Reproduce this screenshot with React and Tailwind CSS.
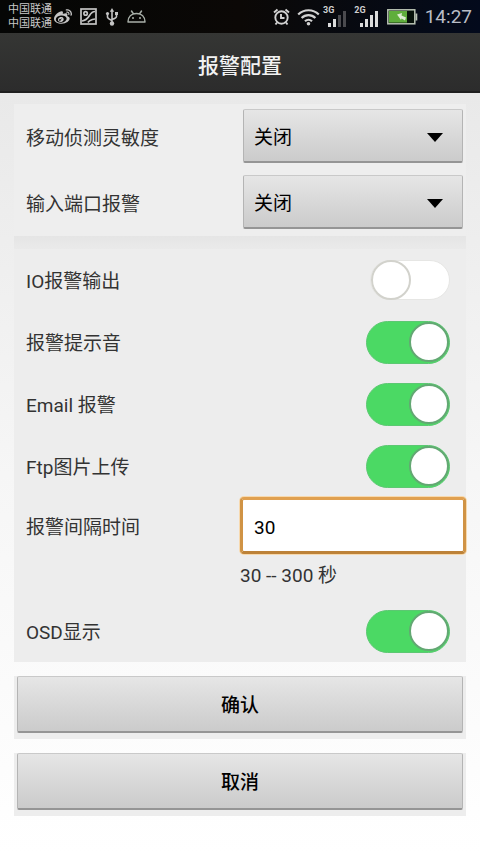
import { useState } from 'react';
import { FaWeibo } from 'react-icons/fa';

const RAISED = 'bg-linear-to-b from-[#e6e6e6] to-[#cbcbcb] border border-t-[#c9c9c9] border-x-[#b4b4b4] border-b-2 border-b-[#959595] rounded-xs';

const SWITCHES = [
  { id: 'io', label: 'IO报警输出' },
  { id: 'sound', label: '报警提示音' },
  { id: 'email', label: 'Email 报警' },
  { id: 'ftp', label: 'Ftp图片上传' },
];

function PictureIcon() {
  return (
    <svg width="17" height="17" viewBox="0 0 17 17" fill="none" stroke="#c4c4c4" strokeWidth="1.7">
      <rect x="1" y="1" width="15" height="15" />
      <circle cx="5.6" cy="5.4" r="1.7" />
      <path d="M2 13C6.500 12.500 8 10 9.500 7.500S12.500 3.500 15 3.500M8 14.500c1-2 3.500-3 7-3.500" />
    </svg>
  );
}

function UsbIcon() {
  return (
    <svg width="14" height="18" viewBox="0 0 14 18" fill="none" stroke="#c4c4c4" strokeWidth="1.6">
      <path d="M7 3v12M2.500 6v3c0 1.500 1.500 2 4.500 3.500M11.500 6v2.500c0 1.500-1.500 2-4.500 3" />
      <path d="M7 0 9.200 3.800H4.800Z" fill="#c4c4c4" stroke="none" />
      <circle cx="2.500" cy="5.500" r="1.600" fill="#c4c4c4" stroke="none" />
      <rect x="10" y="4" width="3" height="3" fill="#c4c4c4" stroke="none" />
      <circle cx="7" cy="15.500" r="2.200" fill="#c4c4c4" stroke="none" />
    </svg>
  );
}

function AndroidIcon() {
  return (
    <svg width="19" height="15" viewBox="0 0 19 15" fill="none" stroke="#a9b0a9" strokeWidth="1.500">
      <path d="M1 13C1 7.500 4.500 4.500 9.500 4.500S18 7.500 18 13ZM4.500 2l2 3M14.500 2l-2 3" strokeLinejoin="round" strokeLinecap="round" />
      <circle cx="6" cy="9" r="1" fill="#a9b0a9" stroke="none" />
      <circle cx="13" cy="9" r="1" fill="#a9b0a9" stroke="none" />
    </svg>
  );
}

function AlarmIcon() {
  return (
    <svg width="17" height="18" viewBox="0 0 17 18" fill="none" stroke="#d2d2d2" strokeWidth="1.900">
      <circle cx="8.500" cy="9.500" r="6.200" />
      <path d="M8 6v4h3.500M1 4.500 4.500 1.500M16 4.500 12.500 1.500M4 14.500l-1.500 2M13 14.500l1.500 2" />
    </svg>
  );
}

function WifiIcon() {
  return (
    <svg width="23" height="18" viewBox="0 0 23 18" fill="none" stroke="#d2d2d2" strokeWidth="2.200">
      <path d="M1.200 6.500a14.600 14.600 0 0 1 20.600 0M4.600 10a9.700 9.700 0 0 1 13.800 0M8 13.200a5 5 0 0 1 7 0" />
      <circle cx="11.500" cy="15.800" r="1.800" fill="#d2d2d2" stroke="none" />
    </svg>
  );
}

function Signal({ network, level }) {
  const bars = [4, 8, 12, 16];
  return (
    <div className="flex items-start">
      <span className="text-[9px] leading-[8px] font-bold text-[#cfcfcf]">{network}</span>
      <svg className="-ml-2 mt-1" width="22" height="18" viewBox="0 0 22 18">
        {bars.map((h, i) => (
          <rect key={h} x={2 + i * 5} y={17 - h} width="3" height={h} fill={i < level ? '#dcdcdc' : '#4a4a4e'} />
        ))}
      </svg>
    </div>
  );
}

function BatteryIcon() {
  return (
    <svg width="31" height="16" viewBox="0 0 31 16">
      <rect x="0.800" y="0.800" width="27" height="14" fill="#07120a" stroke="#b9c4b4" strokeWidth="1.500" />
      <rect x="2" y="2" width="18" height="11.600" fill="#5fae3c" />
      <rect x="28.500" y="4.500" width="1.800" height="7" fill="#b9c4b4" />
      <path d="M10 5.500 15 4l-.5 2.500L19 8.500l-1 3-3.500-2-.5 1.500Z" fill="#dcecd2" />
    </svg>
  );
}

function StatusBar() {
  return (
    <div className="h-[33px] bg-linear-to-r from-[#050605] via-[#0b0806] to-[#030a1c] flex items-center justify-between px-2">
      <div className="flex items-center">
        <div className="text-[11px] leading-[14px] text-[#c8c8c8]">
          <div>中国联通</div>
          <div>中国联通</div>
        </div>
        <div className="flex items-center gap-2 pl-0.5">
          <FaWeibo size={18} color="#c4c4c4" />
          <PictureIcon />
          <UsbIcon />
          <AndroidIcon />
        </div>
      </div>
      <div className="flex items-center gap-[7px]">
        <AlarmIcon />
        <WifiIcon />
        <div className="flex gap-[6px] -ml-1">
          <Signal network="3G" level={2} />
          <Signal network="2G" level={4} />
        </div>
        <BatteryIcon />
        <span className="text-[19px] leading-6 text-[#b9bdc6]">14:27</span>
      </div>
    </div>
  );
}

function SelectRow({ id, label }) {
  return (
    <div className="h-[66px] grid grid-cols-2 items-center">
      <label htmlFor={id} className="pl-3 pt-1">{label}</label>
      <div className="relative mx-[3px] mb-[2px]">
        <select id={id} className={`w-full h-[54px] appearance-none pl-[10px] pt-1 text-black ${RAISED}`}>
          <option>关闭</option>
          <option>开启</option>
        </select>
        <svg className="absolute right-5 top-6 pointer-events-none" width="16" height="9" viewBox="0 0 16 9">
          <path d="M0 0h16L8 9Z" fill="#000" />
        </svg>
      </div>
    </div>
  );
}

function SwitchRow({ id, label, checked, onChange }) {
  return (
    <div className="h-[62px] flex items-center justify-between pl-3 pr-4">
      <label htmlFor={id} className="pt-1">{label}</label>
      <input id={id} type="checkbox" role="switch" checked={checked} onChange={onChange}
        className="appearance-none flex items-center w-[80px] h-[40px] rounded-full bg-white border border-[#e6e6e4] checked:w-[84px] checked:h-[43px] checked:border-[#5cc872] checked:bg-[#4bd964] checked:justify-end before:block before:size-[40px] before:rounded-full before:bg-white before:border-2 before:border-[#d2d2cc] checked:before:border-[#63a873]" />
    </div>
  );
}

function ActionButton({ children }) {
  return (
    <div className="mt-[14px] px-[3px] pb-[6px] bg-[#ededed]">
      <button type="button" className={`w-full h-[57px] pt-1 text-black font-medium ${RAISED}`}>{children}</button>
    </div>
  );
}

export default function App() {
  const [on, setOn] = useState({ io: false, sound: true, email: true, ftp: true, osd: true });
  const [interval, setInterval] = useState('30');

  const toggle = (id) => setOn({ ...on, [id]: !on[id] });

  return (
    <div className="min-h-screen flex flex-col bg-white text-[19px] leading-7 text-[#333333] font-[Roboto,'Noto_Sans_CJK_SC',sans-serif]">
      <StatusBar />
      <header className="h-[60px] pt-1 bg-linear-to-b from-[#353634] to-[#2c2c2c] border-b-2 border-[#1f1f1f] flex items-center justify-center">
        <h1 className="pt-1 text-[21px] font-medium text-[#f2f2f2]">报警配置</h1>
      </header>

      <main className="flex-1 px-[14px] pt-[11px] pb-9 bg-linear-to-b from-[#e9e9e9] via-[#f6f6f6] to-white">
        <section className="bg-[#eeeeee]">
          <SelectRow id="motion" label="移动侦测灵敏度" />
          <SelectRow id="input-port" label="输入端口报警" />
        </section>
        <div className="h-[13px] bg-linear-to-b from-[#e5e5e5] to-[#eaeaea]" />

        <section className="bg-[#ededed]">
          {SWITCHES.map(s => (
            <SwitchRow key={s.id} id={s.id} label={s.label} checked={on[s.id]} onChange={() => toggle(s.id)} />
          ))}
          <div className="grid grid-cols-2 items-center">
            <label htmlFor="interval" className="pl-3 pt-1">报警间隔时间</label>
            <input id="interval" type="text" value={interval} onChange={e => setInterval(e.target.value)}
              className="w-full h-[57px] bg-white border-[3px] border-t-[#e0a050] border-x-[#d09345] border-b-[#bd8238] rounded-sm pl-[11px] pt-1 text-black ring-1 ring-[#f7d9ae] focus:outline-none" />
            <p className="col-start-2 h-[46px] pt-2">30 -- 300 秒</p>
          </div>
          <SwitchRow id="osd" label="OSD显示" checked={on.osd} onChange={() => toggle('osd')} />
        </section>

        <ActionButton>确认</ActionButton>
        <ActionButton>取消</ActionButton>
      </main>
    </div>
  );
}
